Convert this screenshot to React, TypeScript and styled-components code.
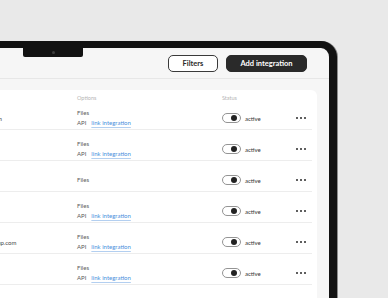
import styled, { createGlobalStyle } from 'styled-components'

const GlobalStyle = createGlobalStyle`
  html, body {
    margin: 0;
    padding: 0;
    background: #e9e9e9;
  }
  body {
    font-family: 'Lato', 'Liberation Sans', sans-serif;
    -webkit-font-smoothing: antialiased;
  }
`

const Stage = styled.div`
  width: 388px;
  height: 298px;
  overflow: hidden;
  background: #e9e9e9;
  padding-top: 41px;
  box-sizing: border-box;
`
const Device = styled.div`
  position: relative;
  margin-left: -186px;
  width: 523px;
  height: 320px;
  box-sizing: border-box;
  border: 8px solid #121212;
  border-top-width: 7px;
  border-bottom: none;
  border-radius: 16px 16px 0 0;
  background: #f6f6f6;
  box-shadow: 1px 0 0 #8c8c8c;
`
const Notch = styled.div`
  position: absolute;
  top: 0;
  left: 201px;
  width: 60px;
  height: 9px;
  background: #121212;
  border-radius: 0 0 2px 2px;
  &::after {
    content: '';
    position: absolute;
    top: 3px;
    left: 29px;
    width: 3px;
    height: 3px;
    border-radius: 50%;
    background: #3c3c3c;
  }
`
const TopBar = styled.div`
  height: 30px;
  display: flex;
  align-items: center;
  justify-content: flex-end;
  gap: 8px;
  padding-right: 22px;
  border-bottom: 1px solid #e7e7e7;
`
const Button = styled.button<{ $primary?: boolean }>`
  height: 17px;
  width: ${p => (p.$primary ? '81px' : '50px')};
  box-sizing: border-box;
  border-radius: 5px;
  border: 1px solid ${p => (p.$primary ? '#2a2a2a' : '#3a3a3a')};
  background: ${p => (p.$primary ? '#2a2a2a' : '#ffffff')};
  color: ${p => (p.$primary ? '#ffffff' : '#2a2a2a')};
  font-family: 'Lato', 'Liberation Sans', sans-serif;
  font-weight: 700;
  font-size: 7.5px;
  padding: 0;
  display: flex;
  align-items: center;
  justify-content: center;
`
const Card = styled.div`
  margin: 11px 12px 0 12px;
  background: #ffffff;
  border-radius: 6px;
  padding-right: 5px;
  min-height: 260px;
`
const Grid = `
  display: grid;
  grid-template-columns: 99px 128px 145px 1fr auto;
  padding-left: 16px;
  padding-right: 6px;
`
const HeaderRow = styled.div`
  ${Grid}
  height: 13px;
  box-sizing: border-box;
  padding-top: 4px;
  font-size: 5.5px;
  line-height: 8px;
  color: #b5b5b5;
`
const Row = styled.div`
  ${Grid}
  padding-top: 9px;
  padding-bottom: 1px;
  border-bottom: 1px solid #ededed;
  ${HeaderRow} + & {
    padding-top: 5px;
  }
`
const Cell = styled.div`
  height: 20px;
  display: flex;
  align-items: center;
  font-size: 6px;
  color: #4a4a4a;
  white-space: nowrap;
`
const Options = styled.div`
  height: 20px;
  display: flex;
  flex-direction: column;
  justify-content: center;
  font-size: 6px;
  line-height: 10px;
  color: #5a5a5a;
`
const ApiLine = styled.div`
  display: flex;
  gap: 5px;
`
const Link = styled.span`
  color: #4a8fdc;
  text-decoration: underline;
  text-decoration-color: #b3cff0;
  text-underline-offset: 1.5px;
`
const Toggle = styled.span`
  position: relative;
  width: 19px;
  height: 10px;
  box-sizing: border-box;
  border: 1px solid #949494;
  border-radius: 6px;
  background: #fff;
  margin-right: 4px;
  &::after {
    content: '';
    position: absolute;
    top: 1px;
    right: 3px;
    width: 6px;
    height: 6px;
    border-radius: 50%;
    background: #222;
  }
`
const StatusText = styled.span`
  font-size: 6px;
  color: #333;
`
const Dots = styled.div`
  height: 20px;
  display: flex;
  align-items: center;
  gap: 2px;
  span {
    width: 2px;
    height: 2px;
    border-radius: 50%;
    background: #2a2a2a;
  }
`

type Item = { name: string; email: string; api: boolean }

const items: Item[] = [
  { name: 'Olivia Lin', email: 'olivia.lin@acme.com', api: true },
  { name: 'Tom Berg', email: 'tom@fabrik.io', api: true },
  { name: 'Lena Voss', email: 'lena@nord.de', api: false },
  { name: 'Raj Patel', email: 'raj@orbit.co', api: true },
  { name: 'Marco Ortiz', email: 'm.ortiz@lumengroup.com', api: true },
  { name: 'Ines Lara', email: 'ines@kite.app', api: true },
]

export default function App() {
  return (
    <>
      <GlobalStyle />
      <Stage>
        <Device>
          <Notch />
          <TopBar>
            <Button>Filters</Button>
            <Button $primary>Add integration</Button>
          </TopBar>
          <Card>
            <HeaderRow>
              <span>Name</span>
              <span>Email</span>
              <span>Options</span>
              <span>Status</span>
              <span />
            </HeaderRow>
            {items.map(item => (
              <Row key={item.email}>
                <Cell>{item.name}</Cell>
                <Cell>{item.email}</Cell>
                <Options>
                  <div>Files</div>
                  {item.api && (
                    <ApiLine>
                      <span>API</span>
                      <Link>link integration</Link>
                    </ApiLine>
                  )}
                </Options>
                <Cell>
                  <Toggle />
                  <StatusText>active</StatusText>
                </Cell>
                <Dots>
                  <span />
                  <span />
                  <span />
                </Dots>
              </Row>
            ))}
          </Card>
        </Device>
      </Stage>
    </>
  )
}
